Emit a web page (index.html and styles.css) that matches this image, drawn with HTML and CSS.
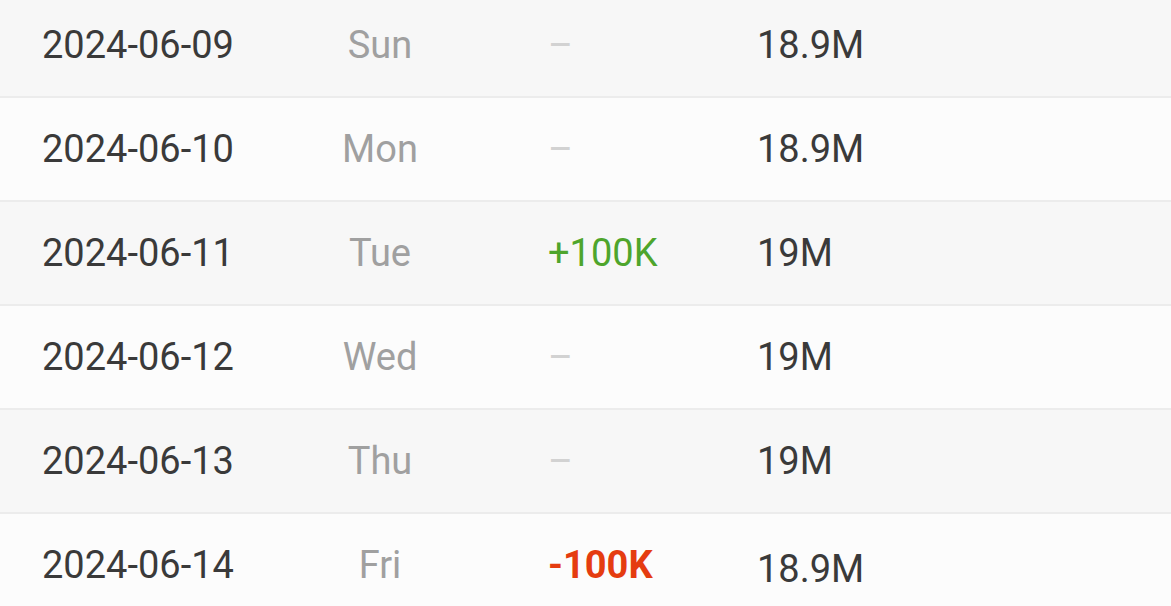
FILE: index.html
```html
<!DOCTYPE html>
<html>
<head>
<meta charset="utf-8">
<link rel="stylesheet" href="styles.css">
</head>
<body>
<div class="table">
  <div class="row odd"><div class="date">2024-06-09</div><div class="day">Sun</div><div class="chg none">–</div><div class="val">18.9M</div></div>
  <div class="row even"><div class="date">2024-06-10</div><div class="day">Mon</div><div class="chg none">–</div><div class="val">18.9M</div></div>
  <div class="row odd"><div class="date">2024-06-11</div><div class="day">Tue</div><div class="chg up">+100K</div><div class="val">19M</div></div>
  <div class="row even"><div class="date">2024-06-12</div><div class="day">Wed</div><div class="chg none">–</div><div class="val">19M</div></div>
  <div class="row odd"><div class="date">2024-06-13</div><div class="day">Thu</div><div class="chg none">–</div><div class="val">19M</div></div>
  <div class="row even"><div class="date">2024-06-14</div><div class="day">Fri</div><div class="chg down">-100K</div><div class="val low">18.9M</div></div>
</div>
</body>
</html>
```
FILE: styles.css
```css
html, body {
  margin: 0;
  padding: 0;
  background: #fcfcfc;
  overflow: hidden;
}
body {
  font-family: Roboto, "Liberation Sans", sans-serif;
  font-size: 38px;
  color: #3a3a3a;
}
.table {
  margin-top: -6px;
}
.row {
  display: grid;
  grid-template-columns: 278px 120px 317px 1fr;
  align-items: center;
  height: 102px;
  padding-left: 42px;
  border-bottom: 2px solid #ececec;
}
.row.odd { background: #f7f7f7; }
.row.even { background: #fcfcfc; }
.date { color: #3a3a3a; }
.day { color: #a0a0a0; text-align: center; }
.chg { padding-left: 108px; }
.chg.none { color: #d2d2d2; }
.chg.up { color: #4ea52c; }
.chg.down { color: #e53c10; font-weight: 700; }
.val { color: #3a3a3a; }
.val.low { padding-top: 8px; }
```
